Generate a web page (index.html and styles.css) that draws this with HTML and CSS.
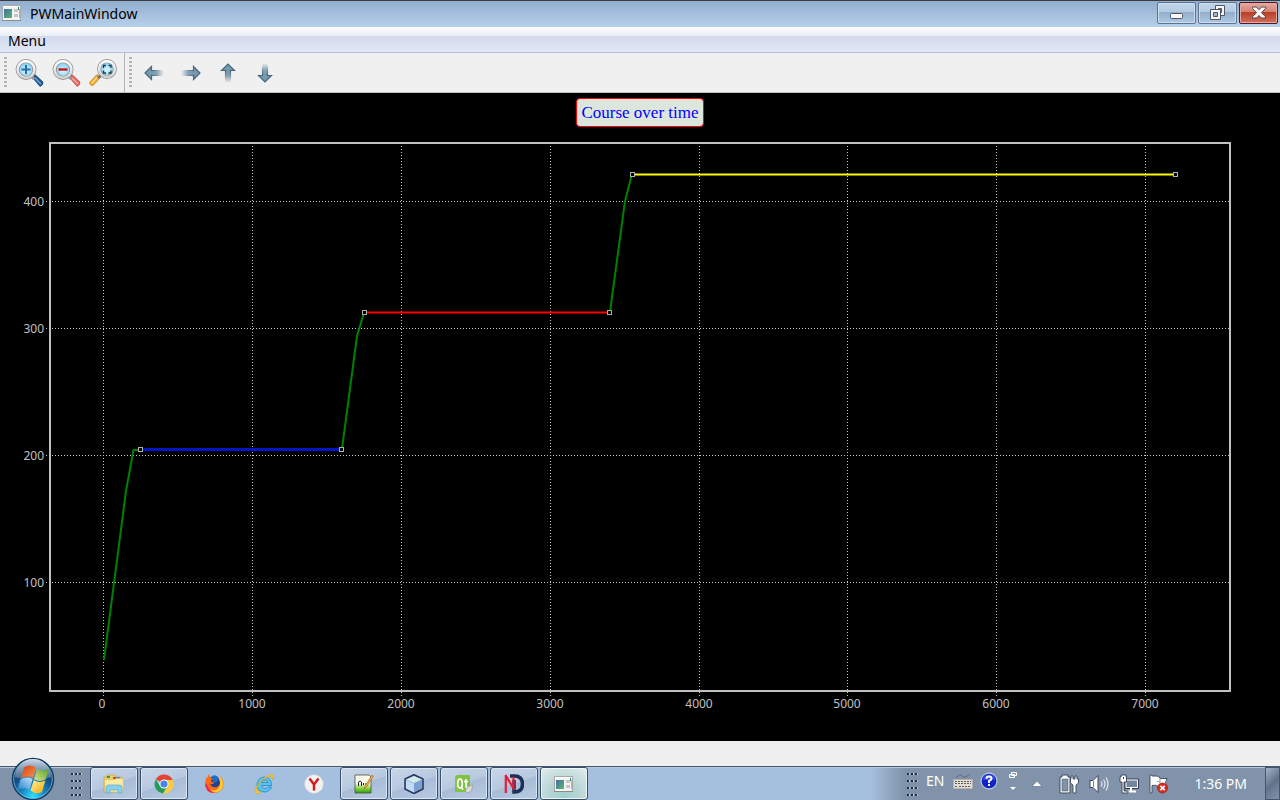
FILE: index.html
```html
<!DOCTYPE html>
<html lang="en">
<head>
<meta charset="utf-8">
<title>PWMainWindow</title>
<link rel="stylesheet" href="styles.css">
</head>
<body>
<svg class="defs" width="0" height="0" aria-hidden="true">
  <defs>
    <linearGradient id="pic" x1="0" y1="0" x2="1" y2="1"><stop offset="0" stop-color="#3f6fa8"/><stop offset="1" stop-color="#5fb86a"/></linearGradient>
    <radialGradient id="lens" cx=".5" cy=".55" r=".6"><stop offset="0" stop-color="#e2f7ff"/><stop offset=".5" stop-color="#9fdcf8"/><stop offset="1" stop-color="#5db9ea"/></radialGradient>
    <linearGradient id="metal" x1="0" y1="0" x2="0" y2="1"><stop offset="0" stop-color="#fff"/><stop offset="1" stop-color="#d2d2d2"/></linearGradient>
    <linearGradient id="shaft" x1="0" y1="0" x2="1" y2="0"><stop offset="0" stop-color="#7898ae"/><stop offset=".4" stop-color="#84a1b5"/><stop offset="1" stop-color="#8aa6b8" stop-opacity=".1"/></linearGradient>
    <linearGradient id="edge" gradientUnits="userSpaceOnUse" x1="8" y1="0" x2="18" y2="0"><stop offset="0" stop-color="#46677e"/><stop offset="1" stop-color="#46677e" stop-opacity="0"/></linearGradient>
    <symbol id="app" viewBox="0 0 20 16">
      <rect x=".5" y=".5" width="18" height="15" fill="#f3f3f3" stroke="#a8a8a8"/>
      <path d="M0 15.5h19" stroke="#8b8b8b"/>
      <path d="M1 1.500h15" stroke="#fff"/>
      <rect x="2" y="4" width="8" height="9" fill="url(#pic)"/>
      <path d="M12 4h4v3h-4zM12 9h4v3h-4z" fill="#c6c6c6"/>
      <path d="M16.500 2v3" stroke="#238477"/><path d="M17.500 4v9" stroke="#b5b5b5"/>
    </symbol>
    <symbol id="grip" viewBox="0 0 12 26">
      <path d="M1 2h3v2H1zM5 2h3v2H5zM9 2h3v2H9zM1 9h3v2H1zM5 9h3v2H5zM9 9h3v2H9zM1 16h3v2H1zM5 16h3v2H5zM9 16h3v2H9zM1 23h3v2H1zM5 23h3v2H5zM9 23h3v2H9z" fill="#bccbdc"/>
      <path d="M1 2h2v2H1zM5 2h2v2H5zM9 2h2v2H9zM1 9h2v2H1zM5 9h2v2H5zM9 9h2v2H9zM1 16h2v2H1zM5 16h2v2H5zM9 16h2v2H9zM1 23h2v2H1zM5 23h2v2H5zM9 23h2v2H9z" fill="#272e38"/>
    </symbol>
    <symbol id="arrow" viewBox="0 0 20 16">
      <path d="M8 5.500h11.500v5H8z" fill="url(#shaft)"/>
      <path d="M1 8 7.500 1.500v4H9v5H7.500v4z" fill="#7898ae"/>
      <path d="M18 5.500H7.500v-4L1 8l6.500 6.500v-4H18" fill="none" stroke="url(#edge)" stroke-width="1.200"/>
    </symbol>
  </defs>
</svg>

<header class="titlebar">
  <svg class="app-icon" viewBox="0 0 20 16" aria-hidden="true"><use href="#app"/></svg>
  <h1 class="window-title">PWMainWindow</h1>
  <div class="window-controls">
    <button class="win-btn" type="button" aria-label="Minimize">
      <svg width="16" height="16" viewBox="0 0 16 16"><rect x="1.500" y="8.500" width="12" height="5" rx="1" fill="#f6f6f6" stroke="#4e5565"/></svg>
    </button>
    <button class="win-btn" type="button" aria-label="Restore">
      <svg width="16" height="16" viewBox="0 0 16 16"><path d="M5.500.5h9v10h-9z" fill="#f6f6f6" stroke="#4e5565"/><path d="M8.500 3.500h3v4h-3z" fill="#9ab4d0" stroke="#4e5565"/><path d="M.5 4.500h10v10H.5z" fill="#f6f6f6" stroke="#4e5565"/><path d="M3.500 7.500h4v4h-4z" fill="#9ab4d0" stroke="#4e5565"/></svg>
    </button>
    <button class="win-btn close" type="button" aria-label="Close">
      <svg width="16" height="16" viewBox="0 0 16 16"><path d="M1.500 2h4l2.500 2.700L10.500 2h4v1.500L10.500 7.700l4 4V13h-4L8 10.500 5.500 13h-4v-1.300l4-4-4-4.200z" fill="#f6f6f6" stroke="#52484f" stroke-linejoin="round"/></svg>
    </button>
  </div>
</header>

<nav class="menubar"><button class="menu-item" type="button">Menu</button></nav>

<div class="toolbar" role="toolbar" aria-label="Chart tools">
  <div class="tool-group">
    <span class="handle"></span>
    <button class="tool" type="button" aria-label="Zoom in">
      <svg width="30" height="30" viewBox="0 0 30 30"><path d="m18 19 3-2.500 8 7.500q.5 3-3 4.500z" fill="#235a94" stroke="#174373" stroke-width=".7"/><path d="m21 20 6 6" stroke="#79a9d8" stroke-width="1.300"/><path d="m17 18 3 3" stroke="#999" stroke-width="3"/><circle cx="12" cy="11.500" r="8.400" fill="url(#lens)" stroke="#8c8c8c" stroke-width="4"/><circle cx="12" cy="11.500" r="8.400" fill="none" stroke="url(#metal)" stroke-width="2.600"/><path d="M7.500 11.500h9M12 7v9" stroke="#276ca8" stroke-width="2"/></svg>
    </button>
    <button class="tool" type="button" aria-label="Zoom out">
      <svg width="30" height="30" viewBox="0 0 30 30"><path d="m18 19 3-2.500 8 7.500q.5 3-3 4.500z" fill="#dd6860" stroke="#bc5350" stroke-width=".7"/><path d="m21 20 6 6" stroke="#f4b0a8" stroke-width="1.300"/><path d="m17 18 3 3" stroke="#999" stroke-width="3"/><circle cx="12" cy="11.500" r="8.400" fill="url(#lens)" stroke="#8c8c8c" stroke-width="4"/><circle cx="12" cy="11.500" r="8.400" fill="none" stroke="url(#metal)" stroke-width="2.600"/><path d="M7.500 11.500h9" stroke="#c4181c" stroke-width="2.400"/></svg>
    </button>
    <button class="tool" type="button" aria-label="Zoom to fit">
      <svg width="30" height="30" viewBox="0 0 30 30"><path d="m9 16.500 3.500 3L5 27.500q-3 .5-3.500-3z" fill="#f5a829" stroke="#bc7b25" stroke-width=".7"/><path d="m9.500 19-6 6.500" stroke="#ffdc83" stroke-width="1.300"/><path d="m13 17-3 3" stroke="#777" stroke-width="3"/><circle cx="19" cy="11" r="7.900" fill="url(#lens)" stroke="#8c8c8c" stroke-width="4"/><circle cx="19" cy="11" r="7.900" fill="none" stroke="url(#metal)" stroke-width="2.600"/><path d="M15.500 10V7.500H18M20.500 7.500H23V10M23 12.500V15h-2.500M18 15h-2.500v-2.500" fill="none" stroke="#183b4d" stroke-width="1.300"/></svg>
    </button>
  </div>
  <div class="tool-group arrows">
    <span class="handle"></span>
    <button class="tool" type="button" aria-label="Pan left"><svg width="20" height="16" viewBox="0 0 20 16"><use href="#arrow"/></svg></button>
    <button class="tool" type="button" aria-label="Pan right"><svg class="right" width="20" height="16" viewBox="0 0 20 16"><use href="#arrow"/></svg></button>
    <button class="tool" type="button" aria-label="Pan up"><svg class="up" width="20" height="16" viewBox="0 0 20 16"><use href="#arrow"/></svg></button>
    <button class="tool" type="button" aria-label="Pan down"><svg class="down" width="20" height="16" viewBox="0 0 20 16"><use href="#arrow"/></svg></button>
  </div>
</div>

<main class="chart">
  <h2 class="chart-title">Course over time</h2>
  <svg class="plot" viewBox="0 132 1280 609" role="img" aria-label="Course over time">
    <g class="grid">
      <path d="M103.500 146v550M252.500 146v550M401.500 146v550M550.500 146v550M699.500 146v550M847.500 146v550M996.500 146v550M1145.500 146v550"/>
      <path d="M46 201.500h1183M46 328.500h1183M46 455.500h1183M46 582.500h1183"/>
    </g>
    <rect class="frame" x="50" y="143" width="1180" height="548"/>
    <g class="curve">
      <path d="M104 660 126 491 133.500 450H141"/>
      <path d="M342 449 357 336 364 313"/>
      <path d="M610 312 625 201 632 174"/>
    </g>
    <path class="level level-blue" d="M141 449.500h201"/>
    <path class="level level-red" d="M364 312.500h246"/>
    <path class="level level-yellow" d="M632 174.500h543"/>
    <g class="marker">
      <rect x="138.500" y="447.500" width="4" height="4"/><rect x="339.500" y="447.500" width="4" height="4"/>
      <rect x="362.500" y="310.500" width="4" height="4"/><rect x="607.500" y="310.500" width="4" height="4"/>
      <rect x="630.500" y="172.500" width="4" height="4"/><rect x="1173.500" y="172.500" width="4" height="4"/>
    </g>
    <g class="ticks ticks-y">
      <text x="44" y="206">400</text><text x="44" y="333">300</text><text x="44" y="460">200</text><text x="44" y="587">100</text>
    </g>
    <g class="ticks ticks-x">
      <text x="102" y="708">0</text><text x="252" y="708">1000</text><text x="401" y="708">2000</text><text x="550" y="708">3000</text><text x="699" y="708">4000</text><text x="847" y="708">5000</text><text x="996" y="708">6000</text><text x="1145" y="708">7000</text>
    </g>
  </svg>
</main>

<div class="statusbar"></div>

<footer class="taskbar">
  <button class="start" type="button" aria-label="Start">
    <svg width="44" height="44" viewBox="0 0 44 44">
      <defs>
        <radialGradient id="orb" cx=".5" cy=".92" r=".8"><stop offset="0" stop-color="#2fe0ff"/><stop offset=".35" stop-color="#1789c6"/><stop offset=".7" stop-color="#134c80"/><stop offset="1" stop-color="#2a4c70"/></radialGradient>
        <linearGradient id="gloss" x1="0" y1="0" x2="0" y2="1"><stop offset="0" stop-color="#d7e2ec" stop-opacity=".95"/><stop offset="1" stop-color="#7898b6" stop-opacity=".4"/></linearGradient>
        <linearGradient id="f1" x1="0" y1="0" x2="1" y2="1"><stop offset="0" stop-color="#d64019"/><stop offset="1" stop-color="#f79548"/></linearGradient>
        <linearGradient id="f2" x1="0" y1="1" x2="1" y2="0"><stop offset="0" stop-color="#d6e795"/><stop offset="1" stop-color="#5c9e20"/></linearGradient>
        <linearGradient id="f3" x1="1" y1="0" x2="0" y2="1"><stop offset="0" stop-color="#c1e8ff"/><stop offset="1" stop-color="#247bc4"/></linearGradient>
        <linearGradient id="f4" x1="0" y1="0" x2="1" y2="1"><stop offset="0" stop-color="#fff3a0"/><stop offset="1" stop-color="#f5a707"/></linearGradient>
      </defs>
      <circle cx="22" cy="23" r="20.500" fill="url(#orb)" stroke="#143c61" stroke-width="1.500"/>
      <circle cx="22" cy="23" r="19.300" fill="none" stroke="#8fd5ef" stroke-opacity=".6"/>
      <path d="M4 21a18 18 0 0 1 36 0q-18 7-36 0z" fill="url(#gloss)"/>
      <path d="M13 11.500q6-4 12 0L22 22q-6-3-12 .5z" fill="url(#f1)"/>
      <path d="M26 13q5 3.500 12 0L34.500 23.500q-6 3-11.500-.5z" fill="url(#f2)"/>
      <path d="M9.500 23.500q6-3.500 12-.5L18.500 34q-5-3.500-12 0z" fill="url(#f3)"/>
      <path d="M22.800 24q5.500 3.500 11.500.5L31 36q-6 3-11.500-1.500z" fill="url(#f4)"/>
    </svg>
  </button>
  <svg class="task-grip" width="12" height="26" viewBox="0 0 12 26" aria-hidden="true"><use href="#grip"/></svg>
  <div class="tasks">
    <button class="task open" type="button" aria-label="Explorer">
      <svg width="22" height="20" viewBox="0 0 22 20"><path d="M1 3h3V1h8v2h7v15H1z" fill="#eccf6a" stroke="#c4a54c" stroke-width=".7"/><path d="M4 2h3v2H4z" fill="#2a9e48"/><path d="M10 3h3v2h-3z" fill="#d34736"/><path d="M13 3h4v2h-4z" fill="#4096d7"/><path d="M1.500 5.500H12l1-1h7.500L20 18H2z" fill="#faeba2" stroke="#d6ba61" stroke-width=".7"/><path d="M3 19v-5.500q0-2.500 3-2.500h10q3 0 3 2.500V19h-4v-3H7v3z" fill="#8acfed" stroke="#63abd1" stroke-width=".7"/></svg>
    </button>
    <button class="task open" type="button" aria-label="Chrome">
      <svg width="20" height="20" viewBox="0 0 20 20"><path d="M10 10 1.800 5.300A9.500 9.500 0 0 1 18.700 6H10z" fill="#df4435"/><path d="M10 10h0L5.800 12 1.800 5.300A9.500 9.500 0 0 0 9 19.500l4.200-7.300z" fill="#249c59"/><path d="M18.700 6A9.500 9.500 0 0 1 9 19.500l5-7.500L13 6z" fill="#f7ca43"/><circle cx="10" cy="10" r="4.500" fill="#fff"/><circle cx="10" cy="10" r="3.600" fill="#4784ed"/></svg>
    </button>
    <button class="task" type="button" aria-label="Firefox">
      <svg width="20" height="20" viewBox="0 0 20 20"><circle cx="9.500" cy="10" r="7.500" fill="#233f92"/><path d="M8 2q4-2 7 2l-2 4-4 1z" fill="#216cc4"/><path d="M2 4 1 9q0 10 10 10 8-1 8.500-9-.5-5-3-7l-.5-2q-1 3 0 5 1 5-3 7-5 1-7-3 3 1 4-1-3-1-3-3l2-1-3-2-1-3q-1 1-1 3z" fill="#ff6a16"/><path d="M15.500 1q-1 3 0 5 2 6-2 9-4 3-8 0 1 3 5 3.500 8-.5 8.500-8.500-.5-5-3-7z" fill="#ffd32b"/><path d="M1 9q0 10 10 10-6-3-7-7z" fill="#ef2850"/></svg>
    </button>
    <button class="task" type="button" aria-label="Internet Explorer">
      <svg width="22" height="22" viewBox="0 0 22 22"><path d="M18.500 12.500H8.500q.5 3 3.500 3 2 0 3-1.500h3.500Q16.500 19 11.500 19 4 18.500 4 11.500 4.500 4.500 11.500 4q7 .5 7 8.500zM8.500 9.500H15Q14.500 7 12 7T8.500 9.500z" fill="#59c5ef" stroke="#2b8fcb" stroke-width=".9"/><path d="M3 20.500Q-1 18 8 8q8-8 12-6 1.500 1.500-.5 5 0-3-1.500-3.500Q14 3 8 9q-6 7-3 9 1 1 4 0-4 3.500-6 2.500z" fill="#f5c92c" stroke="#c99416" stroke-width=".4"/></svg>
    </button>
    <button class="task" type="button" aria-label="Yandex Browser">
      <svg width="20" height="20" viewBox="0 0 20 20"><circle cx="10" cy="10" r="9.300" fill="#f2f2f2" stroke="#d5d5d5" stroke-width=".7"/><path d="m5.500 4.500 4.500 6 4.500-6M10 10.500V16.500" fill="none" stroke="#d61a20" stroke-width="2.500"/></svg>
    </button>
    <button class="task open" type="button" aria-label="Text editor">
      <svg width="20" height="20" viewBox="0 0 20 20"><defs><linearGradient id="note" x1="0" y1="0" x2="0" y2="1"><stop offset=".45" stop-color="#f7faed"/><stop offset=".75" stop-color="#84d23e"/><stop offset="1" stop-color="#2b9b0e"/></linearGradient></defs><path d="M1 1h14l2 2v16H1z" fill="url(#note)" stroke="#46513f" stroke-width=".8"/><path d="M4.500 12V8q1.500-2 3 0v4M9.500 9v2M12 9v2" fill="none" stroke="#222"/><path d="m10 15 1-3 7-11 1.500 1-7 11z" fill="#f3a944" stroke="#9d682b" stroke-width=".6"/></svg>
    </button>
    <button class="task open" type="button" aria-label="VirtualBox">
      <svg width="20" height="20" viewBox="0 0 20 20"><path d="M10 .8 19 5v10l-9 4.500L1 15V5z" fill="#7ca0d1" stroke="#27365d" stroke-width="1.500" stroke-linejoin="round"/><path d="M10 2 18 5.500 10 9 2 5.500z" fill="#d5e9e9"/><path d="m2 6 8 3.500v9L2 14.500z" fill="#c1dbf3"/></svg>
    </button>
    <button class="task open" type="button" aria-label="Qt Creator">
      <svg width="20" height="20" viewBox="0 0 20 20"><path d="M3 1h13v13l-3 4H1V3z" fill="#80c342"/><ellipse cx="6" cy="9.500" rx="2.300" ry="4.500" fill="none" stroke="#fff" stroke-width="1.700"/><path d="m7 13 2 2.500M12 5v7q0 2 2 1.500M10 7.500h4" fill="none" stroke="#fff" stroke-width="1.600"/><path d="M18.500 11q-7 2-7 6 1 3 5 .5 2-2 2-6.500z" fill="#ddd" stroke="#9a9a91" stroke-width=".7"/></svg>
    </button>
    <button class="task open" type="button" aria-label="ND">
      <svg width="20" height="20" viewBox="0 0 20 20"><path d="M6 2h5q7.500.5 7.500 8T11 18h-1V6" fill="none" stroke="#1d3158" stroke-width="3.600"/><path d="M1.800 1v18M1.500 1l9 15M9.500 3v10" fill="none" stroke="#e31e3b" stroke-width="2.200"/></svg>
    </button>
    <button class="task open active" type="button" aria-label="PWMainWindow">
      <svg width="20" height="16" viewBox="0 0 20 16"><use href="#app"/></svg>
    </button>
  </div>
  <div class="tray">
    <svg class="tray-grip" width="12" height="26" viewBox="0 0 12 26" aria-hidden="true"><use href="#grip"/></svg>
    <button class="lang" type="button">EN</button>
    <button class="tray-btn keyboard" type="button" aria-label="Keyboard"><svg width="20" height="16" viewBox="0 0 20 16"><path d="M3 4q4-5 6-2t8-2" fill="none" stroke="#646b73"/><path d="M.5 5.500h19v9H.5z" fill="#e2ded6" stroke="#b4b1ac"/><path d="M2 7.500h16M2 9.500h16M2 12.500h3M6 12.500h8M15 12.500h3" stroke="#625f5a" stroke-dasharray="2 1"/></svg></button>
    <button class="tray-btn help" type="button" aria-label="Help"><svg width="18" height="18" viewBox="0 0 18 18"><circle cx="9" cy="9" r="8" fill="#1021c8" stroke="#b8c2d4" stroke-width="1.300"/><path d="M3 8q0-5 6-5.500T15 8z" fill="#4b65f1" opacity=".6"/><path d="M6.500 6.800Q6.500 4.500 9 4.500t2.500 2.300Q11.500 8 9 9v2" fill="none" stroke="#fff" stroke-width="2"/><path d="M8 12h2v2H8z" fill="#fff"/></svg></button>
    <button class="tray-btn lang-options" type="button" aria-label="Language bar options"><svg width="10" height="20" viewBox="0 0 10 20"><path d="M3.500 1.500h5v3h-5zM1.500 3.500h5v3h-5z" fill="#8093aa" stroke="#fff"/><path d="M2 16h6l-3 3z" fill="#fff"/></svg></button>
    <button class="tray-btn expand" type="button" aria-label="Show hidden icons"><svg width="12" height="8" viewBox="0 0 12 8"><path d="m6 1 5 5.500H1z" fill="#fff" stroke="#56657a" stroke-width=".6"/></svg></button>
    <button class="tray-btn" type="button" aria-label="Power"><svg width="20" height="20" viewBox="0 0 20 20"><path d="M3 3V1h6v2h2v16H1V3z" fill="#fff" stroke="#3d4858"/><path d="M3 5h6v12H3z" fill="#8093aa" stroke="#3d4858" stroke-width=".5"/><path d="M12 2h2v3h2V2h2v3h1.500v4L17 11v8h-3v-8l-2.500-2V5h.5z" fill="#fff" stroke="#3d4858" stroke-width=".9"/></svg></button>
    <button class="tray-btn" type="button" aria-label="Volume"><svg width="20" height="20" viewBox="0 0 20 20"><path d="M1 6.500h3L9 1.500v17l-5-5H1z" fill="#fff" stroke="#3d4858"/><path d="M4.500 7v6" stroke="#788698"/><path d="M12 7.500q2 2.500 0 5M14.500 5.500q3 4.500 0 9M17 3.500q4 6.500 0 13" fill="none" stroke="#e4eaf1" stroke-width="1.200"/></svg></button>
    <button class="tray-btn" type="button" aria-label="Network"><svg width="20" height="20" viewBox="0 0 20 20"><path d="M6 5h13.500v9.500H6z" fill="#66798e" stroke="#343f4e"/><path d="M7 6h11.500v7.500H7z" fill="#73869b" stroke="#fff"/><path d="M12 14v3M8 17.500h9" stroke="#fff" stroke-width="2"/><path d="M2 3V1h5v2h.5v5H5v9h4v2H3V8H1V3z" fill="#fff" stroke="#343f4e" stroke-width=".9"/><path d="M4.500 3v2" stroke="#343f4e"/></svg></button>
    <button class="tray-btn" type="button" aria-label="Action center"><svg width="20" height="20" viewBox="0 0 20 20"><path d="M1 1h2v1h5q2 0 3 2.500h7l-1.500 4 1.500 4H9q-2-2-6-1V19H1z" fill="#fff" stroke="#3d4858" stroke-width=".9"/><path d="M11 4.500v4q-1-1-3-1" fill="none" stroke="#8a96a6"/><circle cx="13.500" cy="14" r="5" fill="#d92b20" stroke="#a51613" stroke-width=".7"/><path d="m11.300 11.800 4.400 4.400m0-4.400-4.400 4.400" stroke="#fff" stroke-width="1.700"/></svg></button>
    <time class="clock" datetime="13:36">1:36 PM</time>
    <button class="show-desktop" type="button" aria-label="Show desktop"></button>
  </div>
</footer>
</body>
</html>
```
FILE: styles.css
```css
* { box-sizing: border-box; }

body {
  margin: 0;
  min-height: 100vh;
  display: flex;
  flex-direction: column;
  background: #f0f0f0;
  color: #000;
  font-family: "Noto Sans", "Open Sans", sans-serif;
  font-size: 14px;
}

button {
  margin: 0;
  padding: 0;
  border: 0;
  background: none;
  color: inherit;
  font: inherit;
}

svg { display: block; flex: none; }
.defs { position: absolute; }

.titlebar {
  display: flex;
  align-items: center;
  height: 27px;
  padding: 0 2px;
  border-top: 1px solid #3b3a40;
  background: linear-gradient(#92aece, #b7d0ea);
}
.app-icon { width: 20px; height: 16px; margin-bottom: 2px; }
.window-title {
  flex: 1;
  margin: 0 0 0 8px;
  font-size: 14px;
  font-weight: 400;
  line-height: 20px;
}
.window-controls { display: flex; gap: 2px; align-self: flex-start; padding-top: 1px; }
.win-btn {
  display: flex;
  align-items: center;
  justify-content: center;
  width: 39px;
  height: 22px;
  border: 1px solid #60738e;
  border-radius: 2px;
  background: linear-gradient(#c3d6ea 0, #b2c9e1 45%, #92adca 46%, #afcae4 100%);
  box-shadow: inset 0 0 0 1px #ccddee;
}
.win-btn.close {
  border-color: #541626;
  background: linear-gradient(#e6a99e 0, #d58172 45%, #b93e28 46%, #cf715a 100%);
  box-shadow: inset 0 0 0 1px #e3aaa0;
}

.menubar {
  display: flex;
  height: 26px;
  border-bottom: 1px solid #b7bdd3;
  background: linear-gradient(#fff 0, #e9eef7 34%, #d4daec 35%, #e2e7f6 100%);
}
.menu-item { padding: 0 8px; line-height: 28px; }

.toolbar {
  display: flex;
  height: 40px;
  border-bottom: 1px solid #c0c0c0;
  background: #f0f0f0;
}
.tool-group { display: flex; align-items: center; gap: 7px; padding: 0 6px 0 4px; }
.tool-group:first-child { border-right: 1px solid #b3b3b3; }
.handle {
  width: 3px;
  height: 32px;
  background: repeating-linear-gradient(#b4b4b4 0 2px, transparent 2px 4px);
}
.tool-group .tool { width: 30px; height: 30px; display: grid; place-items: center; }
.right { transform: rotate(180deg); }
.up { transform: rotate(90deg); }
.down { transform: rotate(270deg); }

.chart {
  flex: 1;
  min-height: 0;
  display: flex;
  flex-direction: column;
  align-items: center;
  padding-top: 5px;
  background: #000;
}
.chart-title {
  margin: 0 0 5px;
  padding: 0 4px;
  border: 1px solid #f00;
  border-radius: 4px;
  background: #dce6dc;
  color: #00f;
  font-family: "Liberation Serif", serif;
  font-size: 17px;
  font-weight: 400;
  line-height: 27px;
}
.plot { width: 100%; flex: 1; min-height: 0; }
.grid { fill: none; stroke: #c8c8c8; stroke-width: 1; stroke-dasharray: 1 2; shape-rendering: crispEdges; }
.frame { fill: none; stroke: #c0c0c0; stroke-width: 2; }
.curve { fill: none; stroke: #008000; stroke-width: 2; }
.level { stroke-width: 2; }
.level-blue { stroke: #0014c8; stroke-width: 3; }
.level-red { stroke: #f00; }
.level-yellow { stroke: #ff0; }
.marker { fill: #000; stroke: #b0b0b0; }
.ticks { fill: #c0c0c0; font-size: 12px; }
.ticks-y { text-anchor: end; }
.ticks-x { text-anchor: middle; }

.statusbar { height: 25px; background: #f0f0f0; }

.taskbar {
  display: flex;
  align-items: center;
  height: 34px;
  border-top: 1px solid #43576d;
  background: linear-gradient(90deg, #8093aa 0, #8093aa 90px, #a5c0de 190px, #a5c0de calc(100% - 410px), #8093aa calc(100% - 375px));
  box-shadow: inset 0 1px #b6c8db;
}
.start { align-self: flex-end; width: 44px; height: 44px; margin-left: 11px; }
.task-grip { margin-left: 15px; }
.tasks { display: flex; gap: 2px; margin-left: 8px; flex: 1; }
.task { width: 48px; height: 33px; display: grid; place-items: center; border: 1px solid transparent; }
.task.open {
  border-color: #3c4f68;
  border-radius: 3px;
  background: linear-gradient(160deg, #c9d6e8, #b7c8df 50%, #a8bcd8 52%, #b9cbe2);
  box-shadow: inset 0 0 0 1px #d9e5f2;
}
.task.open.active {
  background: radial-gradient(circle at 50% 90%, #9fd0cd, #b9d5d6 45%, #e4eeee);
  box-shadow: inset 0 0 0 1px #eef6f8;
}

.tray { display: flex; align-items: center; color: #fff; }
.lang { margin-left: 8px; padding-bottom: 6px; line-height: 20px; }
.tray-btn { display: grid; place-items: center; width: 20px; margin-left: 10px; }
.keyboard { margin-left: 9px; padding-bottom: 4px; }
.help { margin-left: 6px; padding-bottom: 6px; }
.lang-options { margin-left: 4px; padding-bottom: 6px; }
.expand { margin-left: 4px; }
.expand + .tray-btn { margin-left: 12px; }
.clock { margin-left: 25px; line-height: 20px; }
.show-desktop {
  width: 15px;
  height: 33px;
  margin-left: 18px;
  border: 1px solid #46566a;
  background: linear-gradient(135deg, #a6b4c6, #61738a 50%, #8193a9);
}
```
